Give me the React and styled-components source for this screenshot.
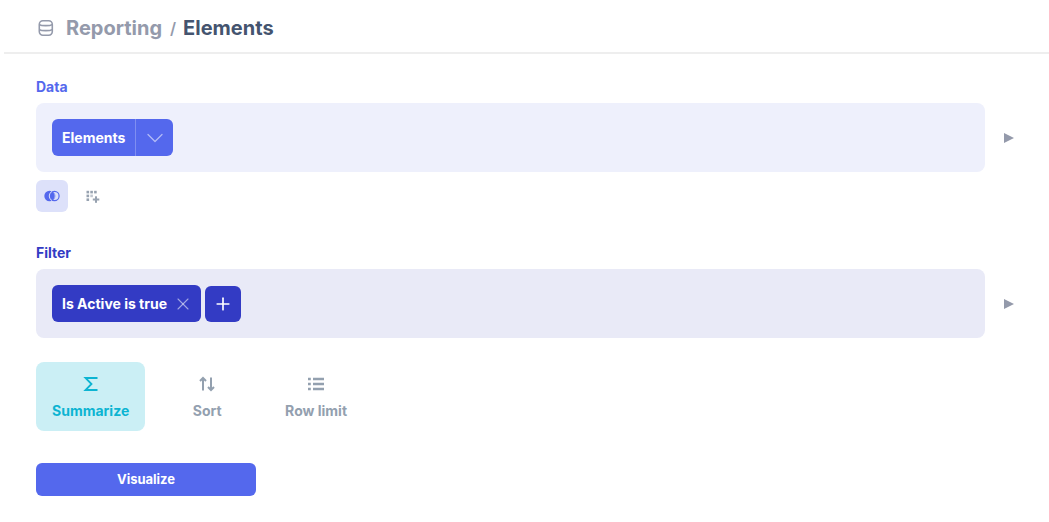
import React from 'react';
import styled, { createGlobalStyle } from 'styled-components';
import { ChevronDown, X, Plus } from 'lucide-react';

const GlobalStyle = createGlobalStyle`
  body {
    margin: 0;
    background: #fff;
    font-family: Inter, "Liberation Sans", sans-serif;
  }
`;

const App = () => {
  return (
    <Page>
      <GlobalStyle />
      <Header>
        <HeaderIcon>
          <svg width="16" height="16" viewBox="0 0 16 16" fill="none" stroke="currentColor" strokeWidth="1.6">
            <rect x="1.3" y="0.8" width="13" height="14.4" rx="3.6" />
            <path d="M1.3 4.6C3.5 6 12 6 14.3 4.6M1.3 9.6C3.5 11 12 11 14.3 9.6" />
          </svg>
        </HeaderIcon>
        <Crumb>Reporting</Crumb>
        <Slash>/</Slash>
        <Current>Elements</Current>
      </Header>
      <Content>
        <Section>
          <Label color="#5468ed">Data</Label>
          <Row>
            <Panel bg="#eef0fc">
              <SplitButton>
                <SplitText>Elements</SplitText>
                <SplitArrow>
                  <ChevronDown size={28} strokeWidth={1.1} />
                </SplitArrow>
              </SplitButton>
            </Panel>
            <RunArrow />
          </Row>
          <ToolRow>
            <ToolButton active>
              <svg width="16" height="12" viewBox="0 0 16 12" fill="none">
                <circle cx="10.5" cy="6" r="4.6" stroke="#5468ed" strokeWidth="1.2" />
                <circle cx="5.5" cy="6" r="5.2" fill="#5468ed" />
                <path d="M8 1.4A5.2 5.2 0 0 0 8 10.6" stroke="#dde1fa" strokeWidth="1" />
                <path d="M8.4 1.4A5.2 5.2 0 0 1 8.4 10.6" stroke="#5468ed" strokeWidth="0.4" />
              </svg>
            </ToolButton>
            <ToolButton>
              <svg width="15" height="15" viewBox="0 0 15 15" fill="#97a2b0">
                <rect x="1.5" y="1.8" width="2.6" height="2.6" />
                <rect x="5.3" y="1.8" width="2.6" height="2.6" />
                <rect x="9.1" y="1.8" width="2.6" height="2.6" />
                <rect x="1.5" y="5.6" width="2.6" height="2.6" />
                <rect x="5.3" y="5.6" width="2.6" height="2.6" opacity="0.6" />
                <rect x="1.5" y="9.4" width="2.6" height="2.6" />
                <rect x="10" y="7.3" width="2" height="6.5" />
                <rect x="7.8" y="9.5" width="6.5" height="2" />
              </svg>
            </ToolButton>
          </ToolRow>
        </Section>
        <FilterSection>
          <Label color="#333bc4">Filter</Label>
          <Row>
            <Panel bg="#e9eaf7">
              <Chip>
                Is Active is true
                <ChipClose>
                  <X size={20} strokeWidth={1.3} />
                </ChipClose>
              </Chip>
              <AddButton>
                <Plus size={20} strokeWidth={2} />
              </AddButton>
            </Panel>
            <RunArrow />
          </Row>
        </FilterSection>
        <Steps>
          <Step active>
            <svg width="18" height="18" viewBox="0 0 18 18" fill="none" stroke="currentColor" strokeWidth="1.8">
              <path d="M15.5 3H3.5L9.5 9L3.5 15H15.5" />
            </svg>
            Summarize
          </Step>
          <Step>
            <svg width="18" height="18" viewBox="0 0 18 18" fill="none" stroke="currentColor" strokeWidth="2">
              <path d="M5 15.5V3M2 6L5 3L8 6M13 2.5V15M10 12L13 15L16 12" />
            </svg>
            Sort
          </Step>
          <Step>
            <svg width="18" height="18" viewBox="0 0 18 18" fill="none" stroke="currentColor" strokeWidth="2.4">
              <path d="M6 4H17M6 9H17M6 14H17" />
              <path d="M1 4H3.8M1 9H3.8M1 14H3.8" />
            </svg>
            Row limit
          </Step>
        </Steps>
        <Visualize>Visualize</Visualize>
      </Content>
    </Page>
  );
};

const Page = styled.div`
  width: 1049px;
  height: 522px;
  overflow: hidden;
`;

const Header = styled.div`
  display: flex;
  align-items: center;
  height: 54px;
  margin-left: 4px;
  padding: 4px 0 0 34px;
  box-sizing: border-box;
  border-bottom: 2px solid #eeeeee;
`;

const HeaderIcon = styled.span`
  display: flex;
  margin-right: 12px;
  color: #949aab;
`;

const Crumb = styled.span`
  font-size: 20px;
  font-weight: 700;
  color: #949aab;
`;

const Slash = styled.span`
  margin: 0 7px 0 8px;
  font-size: 16px;
  font-weight: 600;
  color: #949aab;
`;

const Current = styled.span`
  font-size: 20px;
  font-weight: 700;
  color: #44546f;
`;

const Content = styled.div`
  padding: 24px 0 0 36px;
`;

const Section = styled.div`
  display: flex;
  flex-direction: column;
`;

const FilterSection = styled(Section)`
  margin-top: 32px;
`;

const Label = styled.div`
  height: 17px;
  margin-bottom: 8px;
  font-size: 14px;
  line-height: 17px;
  font-weight: 700;
  color: ${(p) => p.color};
`;

const Row = styled.div`
  display: flex;
  align-items: center;
`;

const Panel = styled.div`
  display: flex;
  align-items: center;
  gap: 4px;
  width: 949px;
  height: 69px;
  padding: 0 16px;
  box-sizing: border-box;
  border-radius: 8px;
  background: ${(p) => p.bg};
`;

const RunArrow = styled.span`
  width: 0;
  height: 0;
  margin-left: 19px;
  border-left: 10px solid #949aab;
  border-top: 5px solid transparent;
  border-bottom: 5px solid transparent;
`;

const SplitButton = styled.div`
  display: flex;
  align-items: stretch;
  height: 37px;
  border-radius: 6px;
  background: #5468ed;
  color: #fff;
`;

const SplitText = styled.span`
  display: flex;
  align-items: center;
  padding: 0 10px;
  font-size: 14px;
  font-weight: 700;
  border-right: 1px solid rgba(255, 255, 255, 0.25);
`;

const SplitArrow = styled.span`
  display: flex;
  align-items: center;
  justify-content: center;
  width: 37px;
  color: rgba(255, 255, 255, 0.55);
`;

const ToolRow = styled.div`
  display: flex;
  gap: 8px;
  margin-top: 8px;
`;

const ToolButton = styled.div`
  display: flex;
  align-items: center;
  justify-content: center;
  width: 32px;
  height: 32px;
  border-radius: 6px;
  background: ${(p) => (p.active ? '#dde1fa' : 'transparent')};
`;

const Chip = styled.div`
  display: flex;
  align-items: center;
  height: 37px;
  padding: 0 8px 0 10px;
  border-radius: 6px;
  background: #333bc4;
  font-size: 14px;
  font-weight: 700;
  color: #fff;
`;

const ChipClose = styled.span`
  display: flex;
  margin-left: 6px;
  color: rgba(255, 255, 255, 0.55);
`;

const AddButton = styled.div`
  display: flex;
  align-items: center;
  justify-content: center;
  width: 36px;
  height: 36px;
  border-radius: 6px;
  background: #333bc4;
  color: #fff;
`;

const Steps = styled.div`
  display: flex;
  gap: 31.5px;
  margin-top: 24px;
`;

const Step = styled.div`
  display: flex;
  flex-direction: column;
  align-items: center;
  gap: 9px;
  height: 69px;
  padding: 13px 16px 0;
  box-sizing: border-box;
  border-radius: 8px;
  font-size: 14px;
  line-height: 17px;
  font-weight: 700;
  color: ${(p) => (p.active ? '#0cb4d2' : '#93a0af')};
  background: ${(p) => (p.active ? '#cbeff5' : 'transparent')};
`;

const Visualize = styled.div`
  display: flex;
  align-items: center;
  justify-content: center;
  width: 220px;
  height: 33px;
  margin-top: 32px;
  padding-bottom: 2px;
  box-sizing: border-box;
  border-radius: 6px;
  background: #5468ed;
  font-size: 13px;
  font-weight: 700;
  color: #fff;
`;

export default App;
